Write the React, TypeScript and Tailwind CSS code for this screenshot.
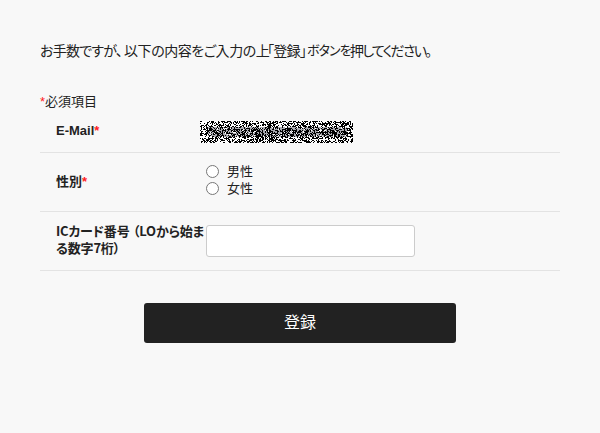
import { ReactNode } from "react";

const MASK_WIDTH = 153;
const MASK_HEIGHT = 22;

// Small seeded generator, so the mask is the same on every render
function createRandom(seed: number) {
  let state = seed;
  return () => {
    state = (state * 1664525 + 1013904223) % 4294967296;
    return state / 4294967296;
  };
}

function buildMask() {
  const random = createRandom(7321);
  let dark = "";
  let light = "";
  let gray = "";
  for (let y = 0; y < MASK_HEIGHT; y++) {
    for (let x = 0; x < MASK_WIDTH; x++) {
      const value = random();
      const inBand =
        y > 5 && y < 16 && x > 7 && x < 147 && random() < 0.85;
      const pixel = `M${x} ${y}h1v1h-1z`;
      if (value < 0.5) {
        dark += pixel;
      } else if (inBand) {
        gray += pixel;
      } else {
        light += pixel;
      }
    }
  }
  return { dark, light, gray };
}

const mask = buildMask();

function MaskedEmail() {
  return (
    <svg
      width={MASK_WIDTH}
      height={MASK_HEIGHT}
      viewBox={`0 0 ${MASK_WIDTH} ${MASK_HEIGHT}`}
      shapeRendering="crispEdges"
      className="block"
    >
      <path d={mask.light} fill="#ffffff" />
      <path d={mask.gray} fill="#aaaab0" />
      <path d={mask.dark} fill="#000000" />
    </svg>
  );
}

function Required() {
  return <span className="text-[#ff2020]">*</span>;
}

interface FormRowProps {
  label: ReactNode;
  className: string;
  children: ReactNode;
}

function FormRow({ label, className, children }: FormRowProps) {
  return (
    <div className={`flex border-b border-[#e3e3e3] pl-4 ${className}`}>
      <div className="w-[150px] shrink-0 font-bold whitespace-nowrap">
        {label}
      </div>
      {children}
    </div>
  );
}

export default function App() {
  return (
    <div className="h-[433px] w-[600px] bg-[#f8f8f8] px-10 pt-[40px] font-['Liberation_Sans','Noto_Sans_CJK_JP',sans-serif] text-[13px] leading-[17px] text-[#222222] [font-feature-settings:'palt']">
      <p className="flex h-[53px] text-[14px] leading-[22px] whitespace-nowrap">
        <span className="w-[84px] tracking-[-0.75px]">お手数ですが、</span>
        <span className="w-[143px] tracking-[-0.45px]">
          以下の内容をご入力の上
        </span>
        <span className="w-[40px] tracking-[-0.7px]">「登録」</span>
        <span className="w-[43px] text-[13px] tracking-[-0.95px]">
          ボタンを
        </span>
        <span className="tracking-[-1.75px]">押してください。</span>
      </p>
      <p className="h-[17px]">
        <Required />
        必須項目
      </p>

      <FormRow
        label={
          <>
            E-Mail
            <Required />
          </>
        }
        className="h-[43px] pt-3"
      >
        <div className="-ml-1.5 -mt-px">
          <MaskedEmail />
        </div>
      </FormRow>

      <FormRow
        label={
          <>
            性別
            <Required />
          </>
        }
        className="h-[59px] items-center pb-[2px]"
      >
        <div className="-mt-[3px]">
          {["男性", "女性"].map((gender) => (
            <label key={gender} className="flex h-[17px] items-center">
              <input
                type="radio"
                name="gender"
                className="mr-2 h-[13px] w-[13px]"
              />
              {gender}
            </label>
          ))}
        </div>
      </FormRow>

      <FormRow
        label={
          <div className="-mt-[5px] font-['Noto_Sans_CJK_JP',sans-serif]">
            <div className="flex">
              <span className="w-[77px] tracking-[-0.2px]">ICカード番号</span>
              <span className="tracking-[-0.2px]">（LOから始ま</span>
            </div>
            <div className="tracking-[-0.2px]">る数字7桁）</div>
          </div>
        }
        className="h-[59px] items-center"
      >
        <input
          type="text"
          className="h-8 w-[209px] rounded-[3px] border border-[#cccccc] bg-white px-2"
        />
      </FormRow>

      <button
        type="button"
        className="mx-auto mt-8 block h-10 w-[312px] rounded-[3px] bg-[#222222] text-base text-white"
      >
        登録
      </button>
    </div>
  );
}
